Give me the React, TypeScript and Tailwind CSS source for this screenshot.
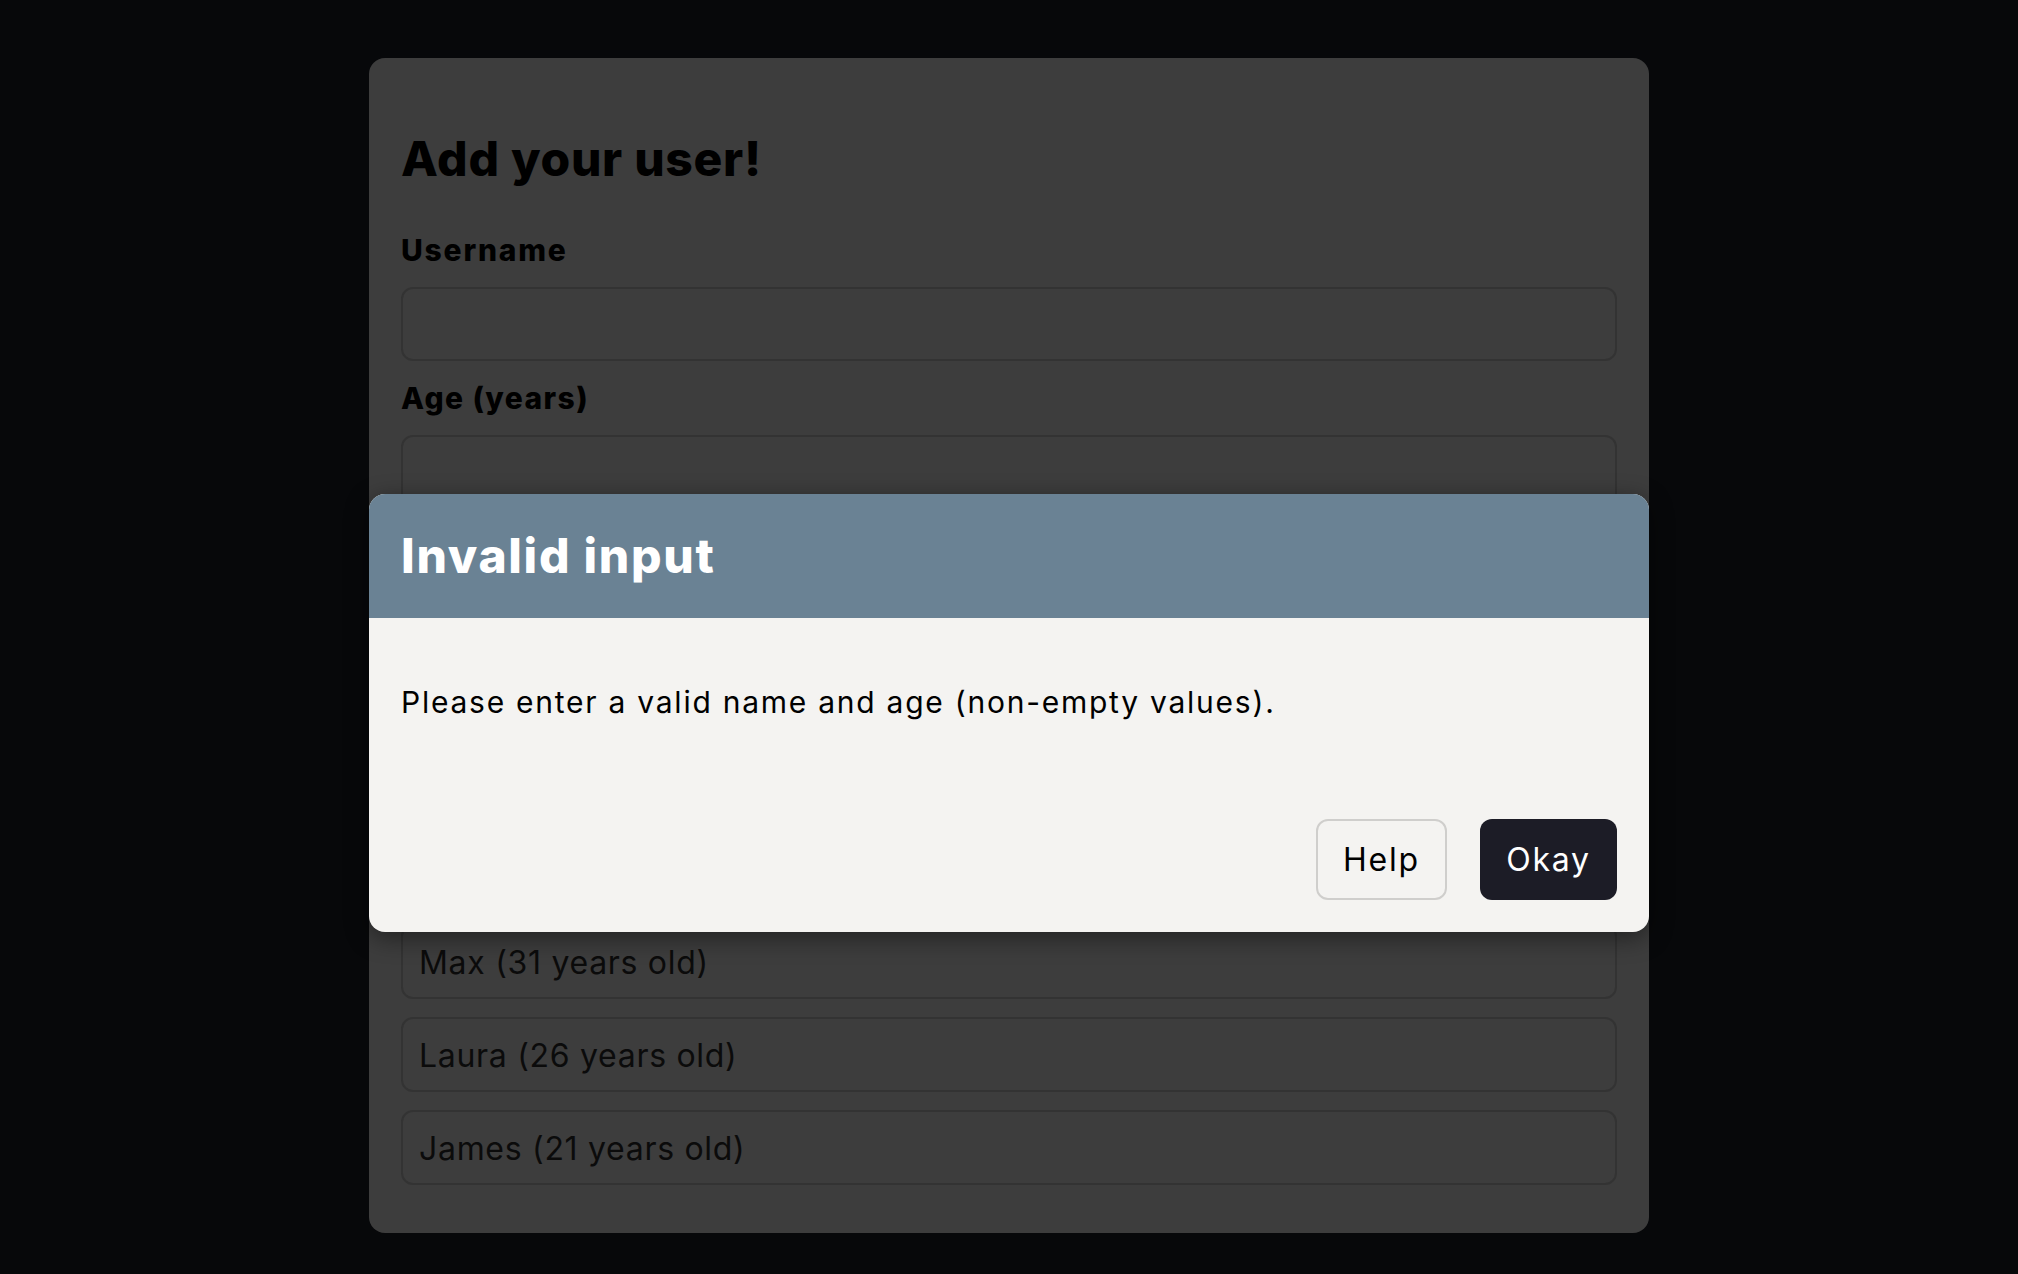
import React from 'react';

const users = [
  { name: 'Max', age: 31 },
  { name: 'Laura', age: 26 },
  { name: 'James', age: 21 },
];

export default function App() {
  return (
    <div
      className="min-h-screen bg-[#07080a] pt-[58px]"
      style={{ fontFamily: 'Inter, "Noto Sans", sans-serif' }}
    >
      <div className="relative mx-auto w-[1280px] rounded-[16px] bg-[#3d3d3d] px-8 pb-12 pt-[77px]">
        <h2 className="text-[48px] font-extrabold leading-[48px] tracking-[0.7px] text-black">Add your user!</h2>

        <form className="mt-[52px] flex flex-col">
          <label className="text-[30px] font-extrabold leading-[30px] tracking-[1.8px] text-black">Username</label>
          <div className="mt-[22px] h-[74px] rounded-[12px] border-2 border-[#333333] bg-[#3d3d3d]" />
          <label className="mt-[22px] text-[30px] font-extrabold leading-[30px] tracking-[1.4px] text-black">Age (years)</label>
          <div className="mt-[22px] h-[74px] rounded-[12px] border-2 border-[#333333] bg-[#3d3d3d]" />
          <div className="mt-[22px] h-[81px] w-[180px] rounded-[12px] bg-[#262626]" />
        </form>

        <ul className="mt-[312px] flex flex-col gap-[18px]">
          {users.map((u) => (
            <li
              key={u.name}
              className="flex h-[75px] items-center rounded-[12px] border-2 border-[#333333] px-4 pt-[2px] text-[32px] tracking-[0.7px] text-[#0b0b0b]"
            >
              {u.name} ({u.age} years old)
            </li>
          ))}
        </ul>

        {/* Modal over the card */}
        <div className="absolute inset-x-0 top-[436px] overflow-hidden rounded-[16px] bg-[#f4f3f1] shadow-[0_6px_24px_rgba(0,0,0,0.45)]">
          <div className="flex h-[124px] items-center bg-[#6a8294] px-8">
            <h2 className="text-[48px] font-extrabold leading-[48px] tracking-[1.7px] text-white">Invalid input</h2>
          </div>
          <div className="px-8 pt-[69px]">
            <p className="text-[30px] leading-[30px] tracking-[1.75px] text-black">
              Please enter a valid name and age (non-empty values).
            </p>
          </div>
          <div className="flex justify-end gap-[33px] px-8 pb-8 pt-[102px]">
            <button className="h-[81px] w-[131px] rounded-[12px] border-2 border-[#cfcecc] text-[32px] tracking-[1.8px] text-black">
              Help
            </button>
            <button className="h-[81px] w-[137px] rounded-[12px] bg-[#1c1c26] text-[32px] tracking-[1.7px] text-white">
              Okay
            </button>
          </div>
        </div>
      </div>
    </div>
  );
}
